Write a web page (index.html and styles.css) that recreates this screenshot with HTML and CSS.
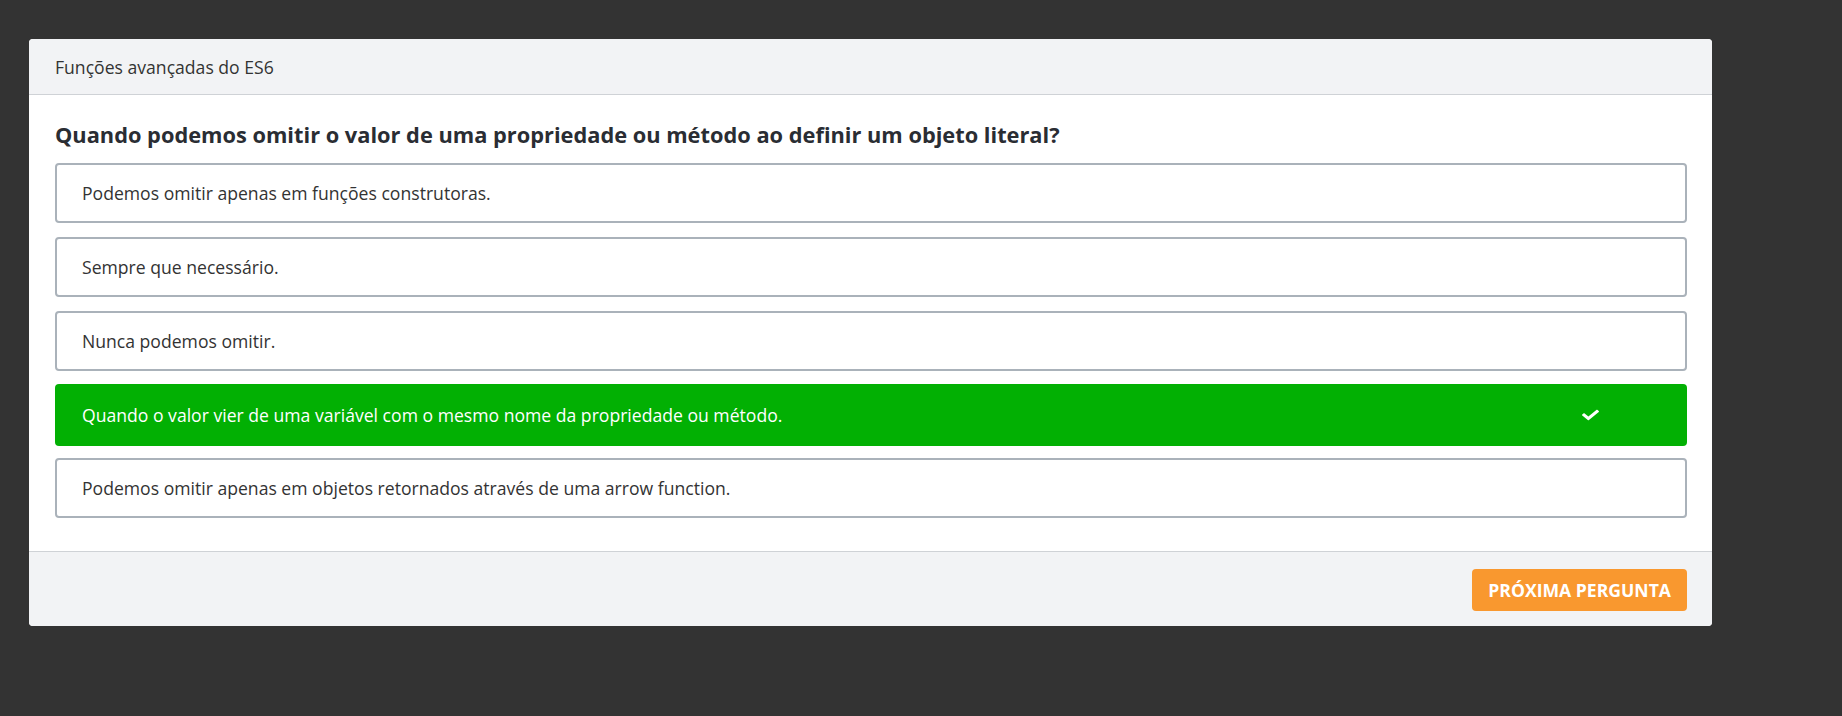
FILE: index.html
```html
<!DOCTYPE html>
<html lang="pt-BR">
<head>
<meta charset="utf-8">
<title>Quiz</title>
<link rel="stylesheet" href="styles.css">
</head>
<body>
<div class="card">
  <div class="card-header">Funções avançadas do ES6</div>
  <div class="card-body">
    <h2 class="question">Quando podemos omitir o valor de uma propriedade ou método ao definir um objeto literal?</h2>
    <div class="options">
      <div class="option">Podemos omitir apenas em funções construtoras.</div>
      <div class="option">Sempre que necessário.</div>
      <div class="option">Nunca podemos omitir.</div>
      <div class="option option-correct">
        <span>Quando o valor vier de uma variável com o mesmo nome da propriedade ou método.</span>
        <svg class="check" viewBox="0 0 512 512" width="17" height="14" preserveAspectRatio="none"><path fill="#fff" d="M173.9 439.4L7.5 273c-10-10-10-26.2 0-36.2l36.2-36.2c10-10 26.2-10 36.2 0L192 312.7 432.1 72.6c10-10 26.2-10 36.2 0l36.2 36.2c10 10 10 26.2 0 36.2L210.1 439.4c-10 10-26.2 10-36.2 0z"/></svg>
      </div>
      <div class="option">Podemos omitir apenas em objetos retornados através de uma arrow function.</div>
    </div>
  </div>
  <div class="card-footer">
    <button class="btn-next">PRÓXIMA PERGUNTA</button>
  </div>
</div>
</body>
</html>
```
FILE: styles.css
```css
* { box-sizing: border-box; }
html, body { margin: 0; padding: 0; }
body {
  background: #333333;
  font-family: "Open Sans", "Noto Sans", sans-serif;
  color: #333;
  padding: 39px 0 0 29px;
  height: 716px;
}
.card {
  width: 1683px;
  background: #fff;
  border-radius: 4px;
  overflow: hidden;
}
.card-header {
  height: 56px;
  background: #f2f3f5;
  border-bottom: 1px solid #cfd2d6;
  display: flex;
  align-items: center;
  padding: 0 26px;
  font-size: 17.6px;
  color: #333;
}
.card-body {
  padding: 25px 25px 33px 26px;
}
.question {
  margin: 0 0 14px;
  font-size: 21.8px;
  line-height: 29px;
  font-weight: 700;
  color: #2a2d33;
}
.options {
  display: flex;
  flex-direction: column;
  gap: 14px;
}
.option {
  height: 60px;
  border: 2px solid #aab2ba;
  border-radius: 4px;
  display: flex;
  align-items: center;
  justify-content: space-between;
  padding: 0 25px;
  font-size: 17.6px;
  color: #333;
}
.option-correct {
  background: #02b003;
  border: none;
  color: #fff;
  height: 62px;
  margin: -1px 0 -2px;
  padding: 0 88px 0 27px;
}
.check { display: block; }
.card-footer {
  background: #f2f3f5;
  border-top: 1px solid #cfd2d6;
  padding: 17px 25px 15px;
  display: flex;
  justify-content: flex-end;
}
.btn-next {
  height: 42px;
  padding: 0 16px;
  border: none;
  border-radius: 4px;
  background: #f9982f;
  color: #fff;
  font-family: "Open Sans", "Noto Sans", sans-serif;
  font-size: 17.6px;
  font-weight: 700;
}
```
